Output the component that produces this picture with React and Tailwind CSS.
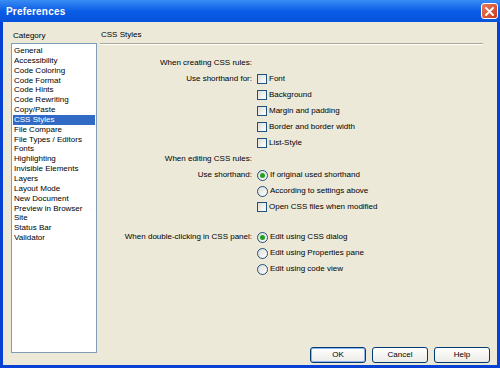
import React from 'react';

const categories = [
  'General', 'Accessibility', 'Code Coloring', 'Code Format', 'Code Hints',
  'Code Rewriting', 'Copy/Paste', 'CSS Styles', 'File Compare', 'File Types / Editors',
  'Fonts', 'Highlighting', 'Invisible Elements', 'Layers', 'Layout Mode',
  'New Document', 'Preview in Browser', 'Site', 'Status Bar', 'Validator',
];

const Checkbox = () => (
  <span className="w-[10px] h-[10px] border border-[#1c5180] bg-gradient-to-br from-[#dcdcd6] to-white shrink-0" />
);

const Radio = ({ checked }) => (
  <span className="w-[11px] h-[11px] rounded-full border border-[#1c5180] bg-gradient-to-br from-[#dcdcd6] to-white flex items-center justify-center shrink-0">
    {checked && <span className="w-[5px] h-[5px] rounded-full bg-[#21a121]" />}
  </span>
);

// one form row: right-aligned label, control to the right
const Row = ({ label, children }) => (
  <div className="flex items-center h-4">
    <div className="w-[154px] text-right pr-[2px] shrink-0">{label}</div>
    <div className="flex items-center gap-[2px] pl-[3px]">{children}</div>
  </div>
);

const Button = ({ children, def }) => (
  <button
    className={`w-[56px] h-[16px] rounded-[3px] border border-[#003c74] bg-gradient-to-b from-white to-[#ecebe6] text-[8px] flex items-center justify-center ${def ? 'shadow-[inset_0_0_0_1px_#8cb4f2]' : ''}`}
  >
    {children}
  </button>
);

export default function App() {
  return (
    <div className="w-[500px] h-[368px] flex flex-col bg-[#0842d4] font-['Liberation_Sans',Arial,sans-serif] text-black">
      {/* title bar */}
      <div className="h-[22px] flex items-center justify-between pl-[6px] pr-[2px] bg-gradient-to-b from-[#3a8cf4] via-[#0a5ce6] to-[#0652dc] shrink-0">
        <span className="text-white font-bold text-[10px] tracking-[0.2px]">Preferences</span>
        <span className="w-[17px] h-[16px] rounded-[3px] border border-white bg-gradient-to-br from-[#e97a5c] to-[#c9391a] flex items-center justify-center">
          <svg width="9" height="9" viewBox="0 0 9 9">
            <path d="M1 1 L8 8 M8 1 L1 8" stroke="white" strokeWidth="1.8" strokeLinecap="round" />
          </svg>
        </span>
      </div>

      <div className="flex-1 mx-[3px] mb-[3px] bg-[#ece9d8] flex text-[8px] leading-[10px]">
        {/* category list */}
        <div className="pl-[8px] w-[97px] shrink-0 flex flex-col">
          <div className="mt-[9px] pl-[2px]">Category</div>
          <div className="mt-[2px] w-[86px] h-[310px] bg-white border border-[#7f9db9] pt-[2px] px-px leading-[9.85px]">
            {categories.map((c) => (
              <div
                key={c}
                className={`pl-px whitespace-nowrap ${c === 'CSS Styles' ? 'bg-[#316ac5] text-white' : ''}`}
              >
                {c}
              </div>
            ))}
          </div>
        </div>

        {/* settings panel */}
        <div className="flex-1 flex flex-col">
          <div className="mt-[8px] pl-px">CSS Styles</div>
          <div className="mt-[3px] mr-[14px] h-[2px] border-t border-[#aca899] border-b border-b-white" />

          <div className="mt-[10px] flex flex-col">
            <Row label="When creating CSS rules:" />
            <Row label="Use shorthand for:"><Checkbox />Font</Row>
            <Row><Checkbox />Background</Row>
            <Row><Checkbox />Margin and padding</Row>
            <Row><Checkbox />Border and border width</Row>
            <Row><Checkbox />List-Style</Row>
            <Row label="When editing CSS rules:" />
            <Row label="Use shorthand:"><Radio checked />If original used shorthand</Row>
            <Row><Radio />According to settings above</Row>
            <Row><Checkbox />Open CSS files when modified</Row>
            <div className="h-[14px]" />
            <Row label="When double-clicking in CSS panel:"><Radio checked />Edit using CSS dialog</Row>
            <Row><Radio />Edit using Properties pane</Row>
            <Row><Radio />Edit using code view</Row>
          </div>

          <div className="mt-auto mb-[2px] pr-[7px] flex justify-end gap-[6px]">
            <Button def>OK</Button>
            <Button>Cancel</Button>
            <Button>Help</Button>
          </div>
        </div>
      </div>
    </div>
  );
}
